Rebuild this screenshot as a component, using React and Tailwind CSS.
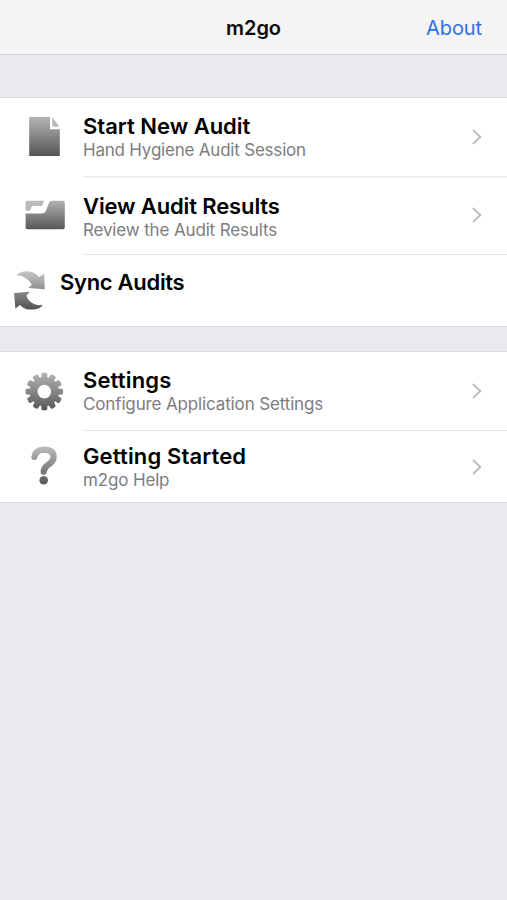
const GEAR = Array.from({ length: 12 }, (_, i) => {
  const at = (r, deg) => {
    const a = ((i * 30 + deg - 90) * Math.PI) / 180;
    return `${(24.3 + r * Math.cos(a)).toFixed(2)} ${(23.6 + r * Math.sin(a)).toFixed(2)}`;
  };
  return `${i ? 'L' : 'M'}${at(14.6, -12)}L${at(17.3, -9.8)}Q${at(18.7, -9)} ${at(18.8, -5)}L${at(18.8, 5)}Q${at(18.7, 9)} ${at(17.3, 9.8)}L${at(14.6, 12)}`;
}).join('') + 'Z';

function Icon({ id, top, bottom, from = '#b4b4b4', to = '#555555', className, children }) {
  return (
    <svg className={`shrink-0 ${className}`} width="48" height="48" viewBox="0 0 48 48" fill={`url(#${id})`}>
      <defs>
        <linearGradient id={id} gradientUnits="userSpaceOnUse" x1="0" y1={top} x2="0" y2={bottom}>
          <stop offset="0" stopColor={from} />
          <stop offset="1" stopColor={to} />
        </linearGradient>
      </defs>
      {children}
    </svg>
  );
}

function Chevron({ className }) {
  return (
    <svg className={`ml-auto mr-6 shrink-0 ${className}`} width="12" height="18" viewBox="0 0 12 18" fill="none" stroke="#bdbdc0" strokeWidth="2">
      <path d="M2 2L9.3 9L2 16" />
    </svg>
  );
}

function Row({ icon, title, titleClass, subtitle, subClass, textClass, chevronClass, className }) {
  return (
    <div className={`flex items-start ${className}`}>
      {icon}
      <div className={`flex flex-col whitespace-nowrap ${textClass}`}>
        <span className={`self-start text-[22px] font-semibold leading-7 text-black ${titleClass}`}>{title}</span>
        {subtitle && <span className={`self-start text-[17px] leading-[21px] text-[#7d7d7f] ${subClass}`}>{subtitle}</span>}
      </div>
      {chevronClass && <Chevron className={chevronClass} />}
    </div>
  );
}

const Separator = ({ className = 'h-px bg-[#e6e6e8]' }) => <div className={`ml-[83px] ${className}`} />;

export default function App() {
  return (
    <div className="flex h-[900px] w-[507px] flex-col overflow-hidden bg-[#ebeaf0] font-['Inter','Liberation_Sans',sans-serif]">
      <header className="grid h-[55px] grid-cols-3 items-center border-b border-[#d3d3d6] bg-[#f4f4f4] pt-0.5">
        <span />
        <h1 className="text-center text-[20px] font-semibold leading-7 tracking-[-0.1px] text-[#0b0b0b]">m2go</h1>
        <a className="mr-[25px] justify-self-end text-[20px] leading-7 tracking-[-0.1px] text-[#2c71e8]">About</a>
      </header>

      <section className="mt-[42px] border-y border-[#dcdce0] bg-white">
        <Row
          className="h-[78px]"
          icon={
            <Icon id="doc" top="5" bottom="44" className="ml-5 mt-3.5">
              <path d="M9.2 5H30V17.2H39.8V44H9.2Z" />
              <path d="M32.3 5.4L39.5 14.5Q35 15.2 32.3 14.2Z" fill="#b9b9b9" />
            </Icon>
          }
          title="Start New Audit"
          subtitle="Hand Hygiene Audit Session" subClass="tracking-[-0.21px]"
          textClass="ml-[15px] mt-3.5" chevronClass="mt-[30px]"
        />
        <Separator className="h-0.5 bg-[#f0f0f1]" />
        <Row
          className="h-[76px]"
          icon={
            <Icon id="folder" top="8" bottom="38" className="ml-5 mt-3.5">
              <path d="M7 8.8H24L22.2 14.1H13Q11.8 14.1 11.4 15.3L10.2 18.8H5.6V10.2Q5.6 8.8 7 8.8Z" fill="#bbbbbb" />
              <path d="M5.6 21.5H21.5Q25 21.5 26.3 18L29 10.6Q29.7 8.8 31.6 8.8H42.8Q44.8 8.8 44.8 10.8V35.6Q44.8 37.3 43 37.3H7.3Q5.6 37.3 5.6 35.6Z" />
            </Icon>
          }
          title="View Audit Results" titleClass="tracking-[-0.13px]"
          subtitle="Review the Audit Results" subClass="tracking-[-0.15px]"
          textClass="ml-[15px] mt-3.5" chevronClass="mt-7"
        />
        <Separator />
        <Row
          className="h-[71px]"
          icon={
            <Icon id="sync" top="5" bottom="44" from="#c8c8c8" to="#505050" className="ml-2.5 mt-[11px]">
              <path d="M6.2 9.2Q10.5 5.2 17 5.3Q24 5.5 29.4 11L34.2 7.4L34.8 23.2L18.3 22L21.9 18.8Q18.5 12.5 12 10.2Q9 9.2 6.2 9.2Z" />
              <path d="M4 27L19.7 25.8L16.4 29.8Q18 34.8 23 37.6Q27.5 40 32.8 38.8Q30 43.3 23.5 43.4H17.5Q12.5 42 9.8 39L5.4 42.8Z" />
            </Icon>
          }
          title="Sync Audits" titleClass="tracking-[-0.3px]"
          textClass="ml-0.5 mt-[13px]"
        />
      </section>

      <section className="mt-6 border-y border-[#dcdce0] bg-white">
        <Row
          className="h-[78px]"
          icon={
            <Icon id="gear" top="5" bottom="43" className="ml-5 mt-4">
              <path fillRule="evenodd" d={`${GEAR}M31.1 23.6A6.8 6.8 0 1 0 17.5 23.6A6.8 6.8 0 1 0 31.1 23.6Z`} />
            </Icon>
          }
          title="Settings" titleClass="tracking-[0.15px]"
          subtitle="Configure Application Settings" subClass="tracking-[-0.14px]"
          textClass="ml-[15px] mt-3.5" chevronClass="mt-[30px]"
        />
        <Separator />
        <Row
          className="h-[71px]"
          icon={
            <Icon id="help" top="3" bottom="42" from="#bdbdbd" className="ml-5 mt-3">
              <path d="M14.4 14Q15.2 6.8 24.3 6.6Q33.6 6.8 33.6 14Q33.6 18 29 21.2Q24 24.4 23.7 28.6" fill="none" stroke="url(#help)" strokeWidth="6.2" strokeLinecap="round" />
              <circle cx="23.7" cy="37.3" r="4.3" />
            </Icon>
          }
          title="Getting Started" titleClass="tracking-[0.14px]"
          subtitle="m2go Help" subClass="tracking-[-0.15px]"
          textClass="ml-[15px] mt-[11px]" chevronClass="mt-[27px]"
        />
      </section>
    </div>
  );
}
